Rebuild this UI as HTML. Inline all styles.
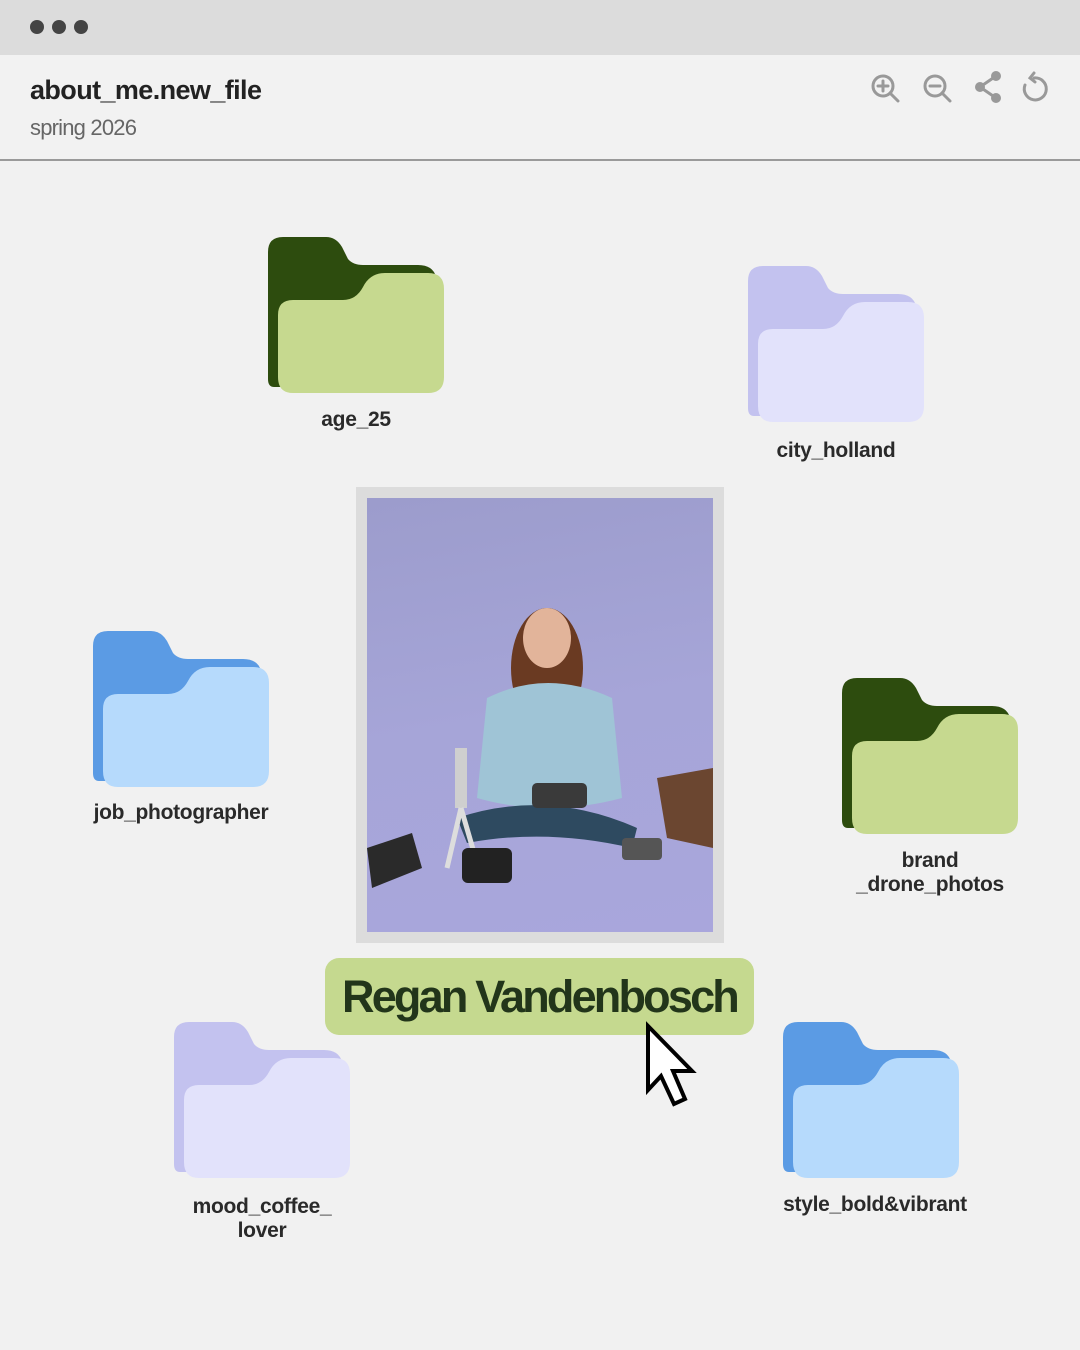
<!DOCTYPE html>
<html><head><meta charset="utf-8"><style>
*{margin:0;padding:0;box-sizing:border-box}
body{width:1080px;height:1350px;background:#f1f1f1;font-family:"Liberation Sans",sans-serif;position:relative;overflow:hidden}
.top{position:absolute;left:0;top:0;width:1080px;height:55px;background:#dcdcdc}
.dot{position:absolute;top:20px;width:14px;height:14px;border-radius:50%;background:#444}
.hdr{position:absolute;left:0;top:55px;width:1080px;height:106px;border-bottom:2px solid #9a9a9a;background:#f2f2f2}
.t1{position:absolute;left:30px;top:20px;font-size:27px;font-weight:bold;color:#222;letter-spacing:-0.6px}
.t2{position:absolute;left:30px;top:60px;font-size:22px;color:#666;letter-spacing:-0.8px}
.f{position:absolute;width:176px;height:156px}
.lbl{position:absolute;width:260px;text-align:center;font-size:21px;font-weight:bold;color:#2a2a2a;letter-spacing:-0.3px;line-height:24px}
.frame{position:absolute;left:356px;top:487px;width:368px;height:456px;background:#dcdcdc}
.photo{position:absolute;left:11px;top:11px;width:346px;height:434px;background:linear-gradient(170deg,#9c9ccc,#a6a5d8 50%,#a9a6dc);overflow:hidden}
.pill{position:absolute;left:325px;top:958px;width:429px;height:77px;background:#c5d98f;border-radius:14px;text-align:center;font-size:45px;font-weight:bold;color:#22351a;letter-spacing:-2.8px;line-height:77px}
</style></head><body>
<div class="top"><div class="dot" style="left:30px"></div><div class="dot" style="left:52px"></div><div class="dot" style="left:74px"></div></div>
<div class="hdr"><div class="t1">about_me.new_file</div><div class="t2">spring 2026</div>
<svg style="position:absolute;left:868px;top:16px" width="190" height="36" viewBox="0 0 190 36" fill="none" stroke="#999" stroke-width="3" stroke-linecap="round">
<circle cx="15" cy="15" r="10"/><path d="M22 22 L30 30 M10 15 H20 M15 10 V20"/>
<circle cx="67" cy="15" r="10"/><path d="M74 22 L82 30 M62 15 H72"/>
<path d="M128 5 L112 16 L128 27"/><circle cx="128" cy="5" r="3.5" fill="#999"/><circle cx="112" cy="16" r="3.5" fill="#999"/><circle cx="128" cy="27" r="3.5" fill="#999"/>
<path d="M166 7 A11 11 0 1 1 157 14"/><path d="M166 2 L162 7 L167 11"/>
</svg></div>

<svg class="f" style="left:268px;top:237px" viewBox="0 0 176 156"><path fill="#2d4c0e" d="M0,15 Q0,0 15,0 H58 Q68,0 74,10 L80,22 Q85,28 95,28 H150 Q165,28 168,40 V140 Q168,150 158,150 H6 Q0,150 0,142 Z"/><path fill="#c6d98f" d="M10,78 Q10,63 25,63 H75 Q88,63 95,50 Q102,36 117,36 H160 Q176,36 176,52 V140 Q176,156 160,156 H25 Q10,156 10,140 Z"/></svg>
<div class="lbl" style="left:226px;top:408px">age_25</div>

<svg class="f" style="left:748px;top:266px" viewBox="0 0 176 156"><path fill="#c3c2ef" d="M0,15 Q0,0 15,0 H58 Q68,0 74,10 L80,22 Q85,28 95,28 H150 Q165,28 168,40 V140 Q168,150 158,150 H6 Q0,150 0,142 Z"/><path fill="#e2e2fb" d="M10,78 Q10,63 25,63 H75 Q88,63 95,50 Q102,36 117,36 H160 Q176,36 176,52 V140 Q176,156 160,156 H25 Q10,156 10,140 Z"/></svg>
<div class="lbl" style="left:706px;top:439px">city_holland</div>

<svg class="f" style="left:93px;top:631px" viewBox="0 0 176 156"><path fill="#5b9be4" d="M0,15 Q0,0 15,0 H58 Q68,0 74,10 L80,22 Q85,28 95,28 H150 Q165,28 168,40 V140 Q168,150 158,150 H6 Q0,150 0,142 Z"/><path fill="#b6dafc" d="M10,78 Q10,63 25,63 H75 Q88,63 95,50 Q102,36 117,36 H160 Q176,36 176,52 V140 Q176,156 160,156 H25 Q10,156 10,140 Z"/></svg>
<div class="lbl" style="left:51px;top:801px">job_photographer</div>

<svg class="f" style="left:842px;top:678px" viewBox="0 0 176 156"><path fill="#2d4c0e" d="M0,15 Q0,0 15,0 H58 Q68,0 74,10 L80,22 Q85,28 95,28 H150 Q165,28 168,40 V140 Q168,150 158,150 H6 Q0,150 0,142 Z"/><path fill="#c6d98f" d="M10,78 Q10,63 25,63 H75 Q88,63 95,50 Q102,36 117,36 H160 Q176,36 176,52 V140 Q176,156 160,156 H25 Q10,156 10,140 Z"/></svg>
<div class="lbl" style="left:800px;top:849px">brand<br>_drone_photos</div>

<svg class="f" style="left:174px;top:1022px" viewBox="0 0 176 156"><path fill="#c3c2ef" d="M0,15 Q0,0 15,0 H58 Q68,0 74,10 L80,22 Q85,28 95,28 H150 Q165,28 168,40 V140 Q168,150 158,150 H6 Q0,150 0,142 Z"/><path fill="#e2e2fb" d="M10,78 Q10,63 25,63 H75 Q88,63 95,50 Q102,36 117,36 H160 Q176,36 176,52 V140 Q176,156 160,156 H25 Q10,156 10,140 Z"/></svg>
<div class="lbl" style="left:132px;top:1195px">mood_coffee_<br>lover</div>

<svg class="f" style="left:783px;top:1022px" viewBox="0 0 176 156"><path fill="#5b9be4" d="M0,15 Q0,0 15,0 H58 Q68,0 74,10 L80,22 Q85,28 95,28 H150 Q165,28 168,40 V140 Q168,150 158,150 H6 Q0,150 0,142 Z"/><path fill="#b6dafc" d="M10,78 Q10,63 25,63 H75 Q88,63 95,50 Q102,36 117,36 H160 Q176,36 176,52 V140 Q176,156 160,156 H25 Q10,156 10,140 Z"/></svg>
<div class="lbl" style="left:745px;top:1193px">style_bold&amp;vibrant</div>

<div class="frame"><div class="photo">
<svg width="346" height="434" viewBox="0 0 346 434">
<ellipse cx="180" cy="170" rx="36" ry="60" fill="#6a3a22"/>
<ellipse cx="180" cy="140" rx="24" ry="30" fill="#e2b49a"/>
<path d="M120 200 Q180 170 245 200 L255 300 Q180 320 110 300 Z" fill="#9fc4d6"/>
<path d="M90 320 Q180 290 270 330 L265 350 Q180 330 100 345 Z" fill="#2e4a60"/>
<rect x="165" y="285" width="55" height="25" rx="5" fill="#3a3a3a"/>
<path d="M290 280 L346 270 L346 350 L300 340 Z" fill="#6b4630"/>
<rect x="255" y="340" width="40" height="22" rx="4" fill="#555"/>
<rect x="88" y="250" width="12" height="60" fill="#cfcfcf"/>
<path d="M94 310 L80 370 M94 310 L110 365" stroke="#ddd" stroke-width="5"/>
<rect x="95" y="350" width="50" height="35" rx="6" fill="#222"/>
<path d="M0 350 L45 335 L55 370 L5 390 Z" fill="#2a2a2a"/>
</svg></div></div>

<div class="pill">Regan Vandenbosch</div>

<svg style="position:absolute;left:640px;top:1020px" width="60" height="95" viewBox="640 1020 60 95">
<path d="M648 1026 V1090 L661 1076 L674 1104 L685 1099 L673 1071 H692 Z" fill="#fff" stroke="#000" stroke-width="4" stroke-linejoin="miter"/>
</svg>
</body></html>
